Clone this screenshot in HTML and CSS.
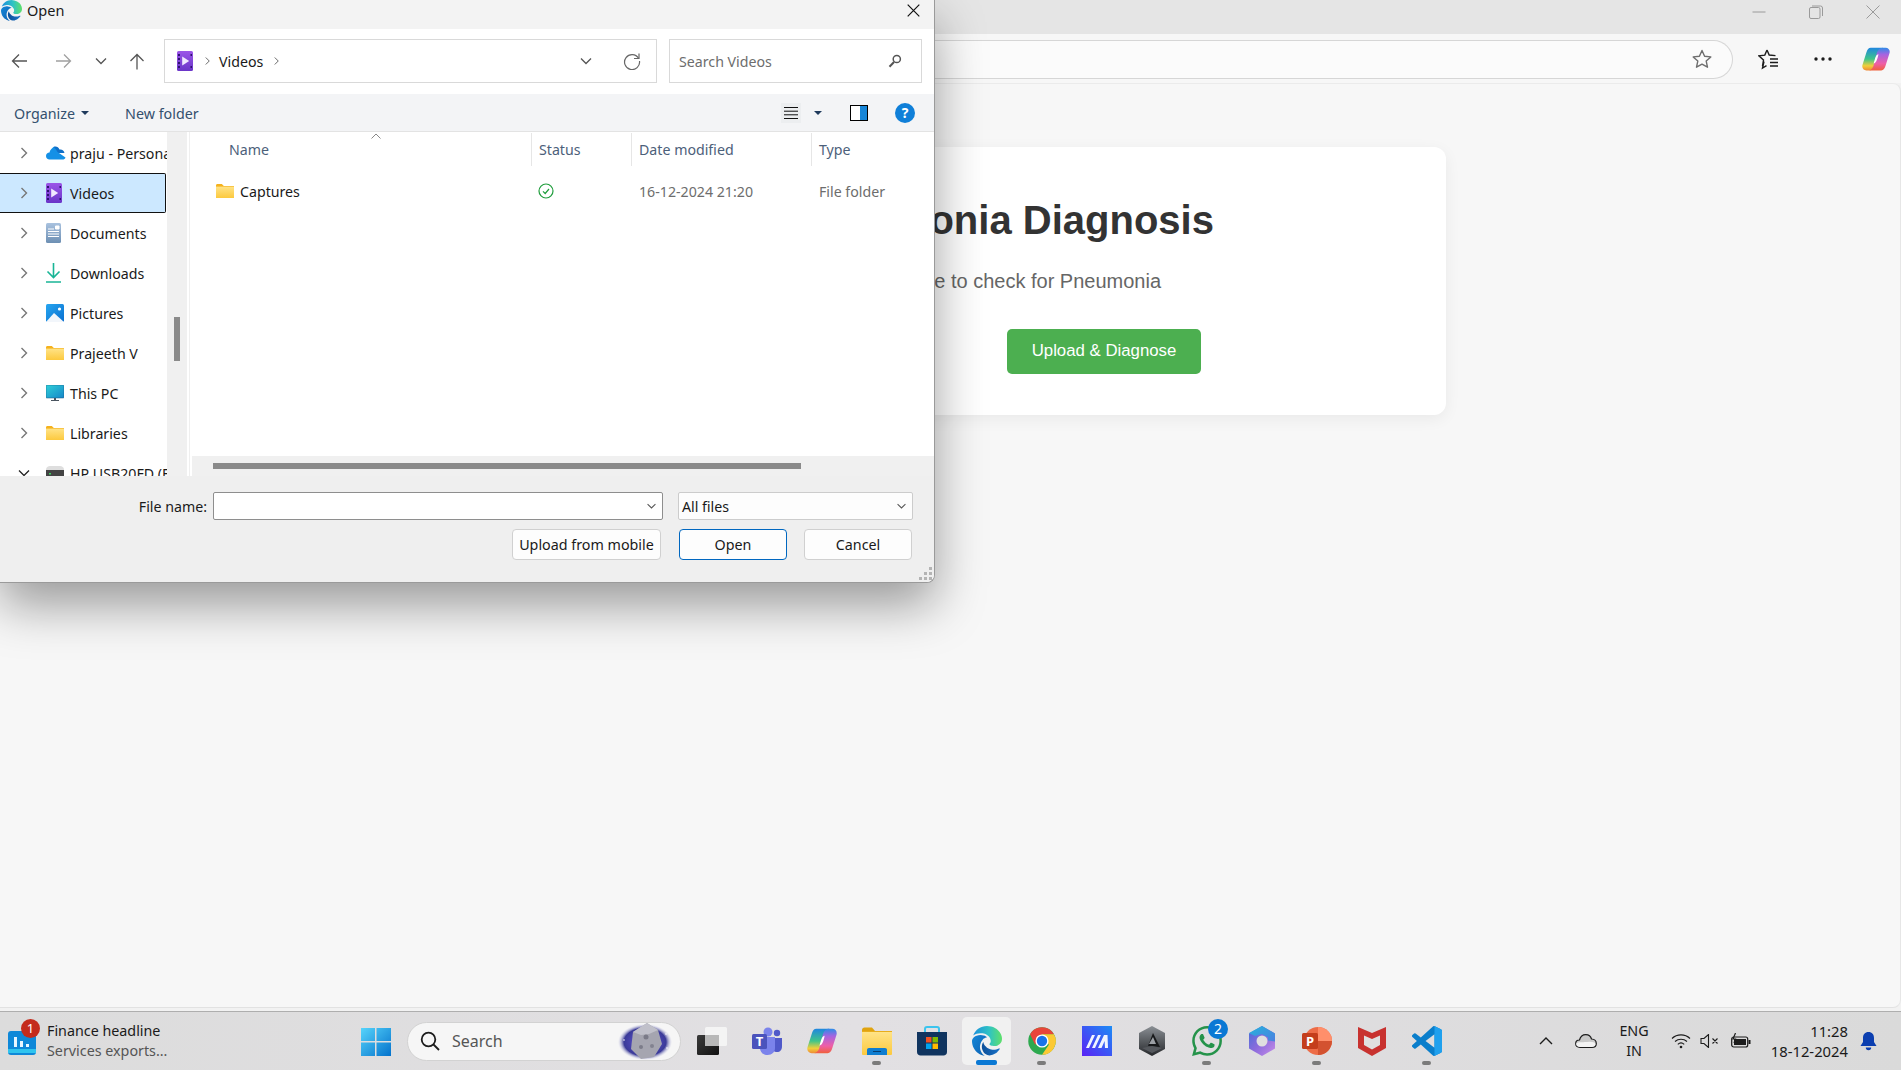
FILE: index.html
```html
<!DOCTYPE html>
<html lang="en">
<head>
<meta charset="utf-8">
<title>Pneumonia Diagnosis</title>
<link rel="stylesheet" href="styles.css">
</head>
<body>
<svg class="defs" aria-hidden="true">
  <defs>
    <linearGradient id="gFolder" x1="0" y1="0" x2="0" y2="1"><stop offset="0" stop-color="#ffe48a"/><stop offset="1" stop-color="#fcc93e"/></linearGradient>
    <linearGradient id="gVideo" x1="0" y1="0" x2="0" y2="1"><stop offset="0" stop-color="#9b55e8"/><stop offset="1" stop-color="#6a35c8"/></linearGradient>
    <linearGradient id="gDoc" x1="0" y1="0" x2="0" y2="1"><stop offset="0" stop-color="#a9c2df"/><stop offset="1" stop-color="#6d8fb3"/></linearGradient>
    <linearGradient id="gPic" x1="0" y1="0" x2="1" y2="1"><stop offset="0" stop-color="#27a6f0"/><stop offset="1" stop-color="#0a6fd0"/></linearGradient>
    <linearGradient id="gPc" x1="0" y1="0" x2="1" y2="1"><stop offset="0" stop-color="#2fd0d8"/><stop offset="1" stop-color="#1686c8"/></linearGradient>
    <linearGradient id="gEdgeA" x1="0" y1="0" x2="1" y2="0"><stop offset="0" stop-color="#1b8fdc"/><stop offset=".55" stop-color="#2fc3c4"/><stop offset="1" stop-color="#5fe06a"/></linearGradient>
    <linearGradient id="gEdgeB" x1="0" y1="0" x2="1" y2="1"><stop offset="0" stop-color="#1487d8"/><stop offset="1" stop-color="#0d5fb0"/></linearGradient>
    <linearGradient id="gEdgeC" x1="0" y1="0" x2="1" y2="0"><stop offset="0" stop-color="#0c4f99"/><stop offset="1" stop-color="#1a73c8"/></linearGradient>
    <linearGradient id="gCopA" x1="0" y1="0" x2="0" y2="1"><stop offset="0" stop-color="#1f86e0"/><stop offset=".5" stop-color="#3fc58a"/><stop offset=".8" stop-color="#f2cf3a"/><stop offset="1" stop-color="#ee8b36"/></linearGradient>
    <linearGradient id="gCopB" x1="0" y1="1" x2="0" y2="0"><stop offset="0" stop-color="#f0603c"/><stop offset=".3" stop-color="#ee5fa8"/><stop offset=".7" stop-color="#a564e0"/><stop offset="1" stop-color="#2d8ce8"/></linearGradient>
    <linearGradient id="gWin" x1="0" y1="0" x2="1" y2="1"><stop offset="0" stop-color="#56d4fb"/><stop offset="1" stop-color="#0472cc"/></linearGradient>
    <linearGradient id="gMura" x1="0" y1="1" x2="1" y2="0"><stop offset="0" stop-color="#5a22f5"/><stop offset="1" stop-color="#1c8cf5"/></linearGradient>
    <linearGradient id="gHex" x1="0" y1="0" x2="0" y2="1"><stop offset="0" stop-color="#8a8f94"/><stop offset="1" stop-color="#26282b"/></linearGradient>
    <linearGradient id="gM365" x1="0" y1="0" x2="1" y2="1"><stop offset="0" stop-color="#3f6fd8"/><stop offset=".5" stop-color="#8b6bdc"/><stop offset="1" stop-color="#c78de8"/></linearGradient>
    <linearGradient id="gM365b" x1="0" y1="0" x2="1" y2="1"><stop offset="0" stop-color="#26b3dc"/><stop offset="1" stop-color="#4b7fe0"/></linearGradient>
    <linearGradient id="gTask" x1="0" y1="0" x2="1" y2="1"><stop offset="0" stop-color="#3a3a3a"/><stop offset="1" stop-color="#111"/></linearGradient>
    <radialGradient id="gMoon" cx=".5" cy=".5" r=".5"><stop offset=".5" stop-color="#4c46b4"/><stop offset=".78" stop-color="#3a3a98"/><stop offset="1" stop-color="#dfe0ee" stop-opacity=".1"/></radialGradient>
    <symbol id="chev" viewBox="0 0 10 14"><path d="M2.5 2l5 5-5 5" fill="none" stroke="currentColor" stroke-width="1.4"/></symbol>
    <symbol id="down" viewBox="0 0 14 10"><path d="M2 2.5l5 5 5-5" fill="none" stroke="currentColor" stroke-width="1.3"/></symbol>
    <symbol id="folder" viewBox="0 0 18 16"><path d="M0 2.5C0 1.6.6 1 1.4 1h4.4l2 2H0z" fill="#f5b21d"/><path d="M0 3h18v12H0z" fill="url(#gFolder)"/><path d="M0 3h18v.7H0z" fill="#f5b82d"/></symbol>
    <symbol id="video" viewBox="0 0 16 20"><rect width="16" height="20" rx="1.500" fill="url(#gVideo)"/><path d="M5.200 5.500v9l7-4.500z" fill="#f1e8ff"/><path d="M1 3h2v2H1zM1 7h2v2H1zM1 11h2v2H1zM1 15h2v2H1zM13.500 3h1.500v2h-1.500zM13.500 15h1.500v2h-1.500z" fill="#2e1270"/></symbol>
    <symbol id="copilot" viewBox="0 0 32 32">
      <path d="M10 3h14c-3 1-4.500 3-5.300 6L15 23c-1 3.500-3 6-6.500 6H5C1.500 29-.5 26 .6 22.500L5 8.500C6 5 7.500 3 10 3z" fill="url(#gCopA)"/>
      <path d="M22 29H8c3-1 4.500-3 5.300-6L17 9c1-3.500 3-6 6.500-6H27c3.500 0 5.500 3 4.400 6.500L27 23.500C26 27 24.500 29 22 29z" fill="url(#gCopB)"/>
      <path d="M15.800 13c.7-1.500 1.800-2.300 3-2.500-.5 2.700-1.200 5.600-2.500 8-.7 1.400-1.800 2.300-3 2.500.8-2.600 1.400-5.700 2.500-8z" fill="#fff"/>
    </symbol>
  </defs>
</svg>

<div class="browser">
  <div class="tabstrip">
    <span class="winbtn"><svg width="14" height="14" viewBox="0 0 14 14"><path d="M.5 7h13" stroke="#9a9a9a"/></svg></span>
    <span class="winbtn"><svg width="14" height="14" viewBox="0 0 14 14" fill="none" stroke="#9a9a9a"><rect x=".5" y="2.500" width="10.500" height="11" rx="1.500"/><path d="M3 1h8.500a2 2 0 0 1 2 2v8"/></svg></span>
    <span class="winbtn"><svg width="14" height="14" viewBox="0 0 14 14"><path d="M.5.5l13 13M13.500.5l-13 13" stroke="#9a9a9a"/></svg></span>
  </div>
  <div class="navbar">
    <div class="omnibox">
      <svg class="omni-star" width="22" height="22" viewBox="0 0 22 22"><path d="M11 2.500l2.600 5.700 6.200.7-4.600 4.200 1.300 6.100-5.500-3.100-5.500 3.100 1.300-6.100-4.600-4.200 6.200-.7z" fill="none" stroke="#6e6e6e" stroke-width="1.400" stroke-linejoin="round"/></svg>
    </div>
    <svg class="nav-fav" width="22" height="22" viewBox="0 0 22 22" fill="none" stroke="#1c1c1c" stroke-width="1.400"><path d="M9 2l2.200 5 6.300.6M6 13.500l-1.500 6.500 4-2.300M9 2L6.800 7.100.9 7.800 5.500 12l-1 6"/><path d="M12 11h8M12 14.500h8M12 18h8"/></svg>
    <svg class="nav-more" width="18" height="6" viewBox="0 0 18 6" fill="#1c1c1c"><circle cx="2" cy="3" r="1.700"/><circle cx="9" cy="3" r="1.700"/><circle cx="16" cy="3" r="1.700"/></svg>
    <svg class="nav-cop" width="28" height="28"><use href="#copilot"/></svg>
  </div>
  <main class="page">
    <section class="card">
      <h1 class="card-title">Pneumonia Diagnosis</h1>
      <p class="card-sub">Upload image to check for Pneumonia</p>
      <button class="diagnose">Upload &amp; Diagnose</button>
    </section>
  </main>
</div>

<div class="dialog">
  <div class="dlg-title">
    <svg class="dlg-logo" width="21" height="21" viewBox="0 0 24 24"><path d="M21.86 17.86q.14 0 .25.12.1.13.1.25t-.11.33l-.32.46-.43.53-.44.5q-.21.25-.38.42l-.22.23q-.58.53-1.34 1.04-.76.51-1.6.91-.86.4-1.74.64t-1.67.24q-.9 0-1.69-.28-.8-.28-1.48-.78-.68-.5-1.22-1.17-.53-.66-.92-1.44-.38-.77-.58-1.6-.2-.83-.2-1.67 0-1 .32-1.96.33-.97.87-1.8.14.95.55 1.77.41.82 1.02 1.5.6.68 1.38 1.21.78.54 1.64.9.86.36 1.77.56.92.2 1.8.2 1.12 0 2.18-.24 1.06-.23 2.06-.72l.2-.1.2-.05z" fill="url(#gEdgeC)"/><path d="M6.36 16.59q0 1.1.27 2.15.27 1.06.78 2.03.51.96 1.24 1.77.74.82 1.66 1.4-1.47-.2-2.8-.74-1.33-.55-2.48-1.37-1.15-.83-2.08-1.9-.92-1.07-1.58-2.33T.36 14.94Q0 13.54 0 12.06q0-.81.32-1.49.31-.68.83-1.23.53-.55 1.2-.96.66-.4 1.35-.66.74-.27 1.5-.39.78-.12 1.55-.12.7 0 1.42.1.72.12 1.4.35.68.23 1.32.57.63.35 1.16.83-.35 0-.7.07-.33.07-.65.23v-.02q-.63.28-1.2.74-.57.46-1.05 1.04-.48.58-.87 1.26-.38.67-.65 1.39-.27.71-.42 1.44-.15.72-.15 1.38z" fill="url(#gEdgeB)"/><path d="M11.96.06q1.7 0 3.33.39 1.63.38 3.07 1.15 1.43.77 2.62 1.93 1.18 1.16 1.98 2.7.49.94.76 1.96.28 1 .28 2.08 0 .89-.23 1.7-.24.8-.69 1.48-.45.68-1.1 1.22-.64.53-1.45.88-.54.24-1.11.36-.58.13-1.16.13-.42 0-.97-.03-.54-.03-1.1-.12-.55-.1-1.05-.28-.5-.19-.84-.5-.12-.09-.23-.24-.1-.16-.1-.33 0-.15.16-.35.16-.2.35-.5.2-.28.36-.68.16-.4.16-.95 0-1.06-.4-1.96-.4-.91-1.06-1.64-.66-.74-1.52-1.28-.86-.55-1.79-.89-.84-.3-1.72-.44-.87-.14-1.76-.14-1.55 0-3.06.45T.94 7.55q.71-1.74 1.81-3.13 1.1-1.38 2.52-2.34 1.41-.96 3.08-1.47Q10.02.06 11.96.06Z" fill="url(#gEdgeA)"/></svg>
    <span class="dlg-name">Open</span>
    <svg class="dlg-close" width="13" height="13" viewBox="0 0 13 13"><path d="M.7.7l11.600 11.600M12.300.7L.7 12.300" stroke="#111" stroke-width="1.200"/></svg>
  </div>

  <div class="dlg-tools">
    <svg class="t-back" width="17" height="16" viewBox="0 0 17 16" fill="none" stroke="#555" stroke-width="1.300"><path d="M16 8H1.500M8 1.500L1.500 8 8 14.500"/></svg>
    <svg class="t-fwd" width="17" height="16" viewBox="0 0 17 16" fill="none" stroke="#a0a0a0" stroke-width="1.300"><path d="M1 8h14.500M9 1.500L15.500 8 9 14.500"/></svg>
    <svg class="t-hist" width="12" height="8" viewBox="0 0 12 8" fill="none" stroke="#555" stroke-width="1.300"><path d="M1 1.500l5 5 5-5"/></svg>
    <svg class="t-up" width="16" height="17" viewBox="0 0 16 17" fill="none" stroke="#555" stroke-width="1.300"><path d="M8 16.500V1.500M1.500 8L8 1.500 14.500 8"/></svg>
    <div class="addr">
      <svg class="a-video" width="16" height="20"><use href="#video"/></svg>
      <svg class="a-chev" width="7" height="10" color="#666"><use href="#chev"/></svg>
      <span class="a-text">Videos</span>
      <svg class="a-chev2" width="7" height="10" color="#666"><use href="#chev"/></svg>
      <svg class="a-drop" width="14" height="10" color="#555"><use href="#down"/></svg>
      <svg class="a-refresh" width="18" height="18" viewBox="0 0 18 18" fill="none" stroke="#666" stroke-width="1.200"><path d="M15.500 6.200A7.500 7.500 0 1 0 16.500 9"/><path d="M16 1.500v5h-5"/></svg>
    </div>
    <div class="searchbox">
      <span class="s-text">Search Videos</span>
      <svg width="14" height="14" viewBox="0 0 14 14" fill="none" stroke="#555" stroke-width="1.500"><circle cx="8.800" cy="5" r="3.600"/><path d="M6 8L1.500 12.800" stroke-width="2"/></svg>
    </div>
  </div>

  <div class="dlg-cmds">
    <span class="cmd">Organize</span><span class="caret"></span>
    <span class="cmd cmd-new">New folder</span>
    <span class="view-btn"><svg width="14" height="14" viewBox="0 0 14 14" stroke="#111"><path d="M0 1.500h14M0 5.200h14M0 8.800h14M0 12.500h14"/></svg></span>
    <span class="caret caret-v"></span>
    <svg class="pane-ico" width="18" height="16" viewBox="0 0 18 16"><rect x=".5" y=".5" width="17" height="15" fill="#fff" stroke="#000"/><rect x="10" y="1" width="7" height="14" fill="#1585d8"/></svg>
    <span class="help">?</span>
  </div>

  <div class="dlg-main">
    <nav class="tree">
      <div class="tree-row"><svg class="tw" width="10" height="14" color="#777"><use href="#chev"/></svg>
        <svg class="ti" width="20" height="14" viewBox="0 0 20 14"><path d="M7.500 1C10 0 12.500 1 13.500 3.500c2.500-.5 4.500 1 5 3.500L7 7z" fill="#0f6fc8"/><path d="M3.500 13.500C1.500 13.500 0 12 0 10c0-2 1.500-3.500 3.500-3.500.5-2.500 2-4 4-5.500 0 0 2 1 4 5l8 5.500c-.5 1.500-1.500 2-3 2z" fill="#1490e6"/></svg>
        <span class="tl">praju - Personal</span></div>
      <div class="tree-row is-sel"><svg class="tw" width="10" height="14" color="#777"><use href="#chev"/></svg>
        <svg class="ti" width="16" height="20"><use href="#video"/></svg><span class="tl">Videos</span></div>
      <div class="tree-row"><svg class="tw" width="10" height="14" color="#777"><use href="#chev"/></svg>
        <svg class="ti" width="15" height="20" viewBox="0 0 15 20"><rect width="15" height="20" rx="1.500" fill="url(#gDoc)"/><path d="M2 6h6M2 8.500h11M2 11h11M2 13.500h11M9.500 3h3.500v3H9.500z" stroke="#fff" fill="#fff"/></svg>
        <span class="tl">Documents</span></div>
      <div class="tree-row"><svg class="tw" width="10" height="14" color="#777"><use href="#chev"/></svg>
        <svg class="ti" width="15" height="20" viewBox="0 0 15 20" fill="none" stroke="#18b596" stroke-width="1.600"><path d="M7.500 0v14M1.500 8.500l6 6 6-6"/><path d="M0 19h15" stroke-width="1.500"/></svg>
        <span class="tl">Downloads</span></div>
      <div class="tree-row"><svg class="tw" width="10" height="14" color="#777"><use href="#chev"/></svg>
        <svg class="ti" width="18" height="18" viewBox="0 0 18 18"><rect width="18" height="18" rx="1.500" fill="url(#gPic)"/><path d="M0 18l8-9 10 9z" fill="#f2f6fb"/><circle cx="13.500" cy="5" r="1.600" fill="#fff"/></svg>
        <span class="tl">Pictures</span></div>
      <div class="tree-row"><svg class="tw" width="10" height="14" color="#777"><use href="#chev"/></svg>
        <svg class="ti" width="18" height="16"><use href="#folder"/></svg><span class="tl">Prajeeth V</span></div>
      <div class="tree-row"><svg class="tw" width="10" height="14" color="#777"><use href="#chev"/></svg>
        <svg class="ti" width="18" height="16" viewBox="0 0 18 16"><rect width="18" height="13" rx=".8" fill="url(#gPc)" stroke="#14517f" stroke-width=".5"/><path d="M8 13h2v2H8zM5 15h8v1H5z" fill="#4a5560"/></svg>
        <span class="tl">This PC</span></div>
      <div class="tree-row"><svg class="tw" width="10" height="14" color="#777"><use href="#chev"/></svg>
        <svg class="ti" width="18" height="16"><use href="#folder"/></svg><span class="tl">Libraries</span></div>
      <div class="tree-row"><svg class="tw tw-open" width="14" height="10" color="#222"><use href="#down"/></svg>
        <svg class="ti" width="18" height="18" viewBox="0 0 18 18"><path d="M0 6c0-3 2-4 4-4h10c2 0 4 1 4 4z" fill="#dedede"/><rect y="6" width="18" height="10" fill="#444"/><rect x="3" y="9" width="2" height="1.500" fill="#3fd060"/></svg>
        <span class="tl">HP USB20FD (E:)</span></div>
    </nav>
    <div class="tree-scroll"><span class="tree-thumb"></span></div>
    <div class="filelist">
      <div class="list-body">
        <div class="cols">
          <span class="col col-name">Name<svg class="sort" width="10" height="6" viewBox="0 0 10 6"><path d="M.5 5.500L5 1l4.500 4.500" fill="none" stroke="#888"/></svg></span>
          <span class="col col-sep">Status</span>
          <span class="col col-sep">Date modified</span>
          <span class="col col-sep">Type</span>
        </div>
        <div class="file-row">
          <span class="f-name"><svg width="18" height="16"><use href="#folder"/></svg>Captures</span>
          <span class="f-stat"><svg width="16" height="16" viewBox="0 0 16 16" fill="none" stroke="#1f9d3c" stroke-width="1.200"><circle cx="8" cy="8" r="7"/><path d="M5 8.300l2.200 2.200L11 6"/></svg></span>
          <span class="f-meta">16-12-2024 21:20</span>
          <span class="f-meta">File folder</span>
        </div>
      </div>
      <div class="hscroll"><span class="hthumb"></span></div>
    </div>
  </div>

  <div class="dlg-foot">
    <div class="foot-row">
      <label class="fn-label">File name:</label>
      <span class="combo"><svg width="11" height="8" color="#555"><use href="#down"/></svg></span>
      <span class="filter"><span>All files</span><svg width="11" height="8" color="#555"><use href="#down"/></svg></span>
    </div>
    <div class="foot-row foot-btns">
      <button class="wbtn wbtn-up">Upload from mobile</button>
      <button class="wbtn wbtn-def">Open</button>
      <button class="wbtn wbtn-cancel">Cancel</button>
    </div>
    <svg class="grip" width="13" height="13" viewBox="0 0 13 13" fill="#b4b4b4"><path d="M10 0h3v3h-3zM5 5h3v3H5zM10 5h3v3h-3zM0 10h3v3H0zM5 10h3v3H5zM10 10h3v3h-3z"/></svg>
  </div>
</div>

<footer class="taskbar">
  <div class="widget">
    <svg class="w-ico" width="28" height="28" viewBox="0 0 28 28"><rect y="4" width="28" height="24" rx="3" fill="#0f88d8"/><rect y="22" width="28" height="4" fill="#2fc4ee"/><path d="M6 10h3v10H6zM12 14h3v6h-3zM18 17h3v3h-3z" fill="#e9f6ff"/></svg>
    <span class="w-badge">1</span>
    <div class="w-text"><span class="w-h">Finance headline</span><span class="w-s">Services exports...</span></div>
  </div>
  <div class="cell"><svg width="30" height="30" viewBox="0 0 30 30" fill="url(#gWin)"><path d="M0 2h14v13H0zM15.500 2H30v13H15.500zM0 16.500h14V30H0zM15.500 16.500H30V30H15.500z"/></svg></div>
  <div class="tsearch">
    <svg width="20" height="20" viewBox="0 0 20 20" fill="none" stroke="#1c1c1c" stroke-width="1.800"><circle cx="8.500" cy="8.500" r="6.800"/><path d="M13.500 13.500L19 19"/></svg>
    <span class="ts-text">Search</span>
    <svg class="ts-moon" width="56" height="38" viewBox="0 0 56 38"><ellipse cx="28" cy="20" rx="27" ry="18" fill="url(#gMoon)"/><path d="M16 10l14-9 11 7 4 14-8 13-13 2-10-10z" fill="#a5a5b0"/><path d="M16 10l14-9 11 7-9 4-8 1z" fill="#c0c0ca"/><circle cx="29" cy="15" r="2.500" fill="#7a7a88"/><circle cx="24" cy="25" r="2" fill="#7c7c8a"/><circle cx="35" cy="24" r="2" fill="#828290"/><circle cx="7" cy="18" r=".8" fill="#fff"/><circle cx="49" cy="12" r=".8" fill="#fff"/><circle cx="50" cy="26" r=".8" fill="#fff"/></svg>
  </div>
  <div class="apps">
    <div class="cell"><svg width="30" height="30" viewBox="0 0 30 30"><rect x="8" y="1" width="22" height="19" rx="1.500" fill="#f4f4f4"/><rect y="9" width="22" height="20" rx="1.500" fill="url(#gTask)"/><rect x="8" y="9" width="14" height="11" fill="#b8b8b8"/></svg></div>
    <div class="cell"><svg width="30" height="28" viewBox="0 0 30 28"><circle cx="25" cy="6" r="3.200" fill="#5059c9"/><path d="M20 11h10v8c0 4-2 6-5 6s-5-2-5-6z" fill="#5059c9"/><circle cx="16" cy="5" r="4.500" fill="#7b83eb"/><path d="M8 10h15v11c0 4-3 7-7.500 7S8 25 8 21z" fill="#7b83eb"/><rect y="7" width="15" height="15" rx="1.500" fill="#4b53bc"/><text class="ico-t" x="7.500" y="19" text-anchor="middle">T</text></svg></div>
    <div class="cell"><svg width="30" height="30"><use href="#copilot"/></svg></div>
    <div class="cell has-dot"><svg width="30" height="28" viewBox="0 0 30 28"><path d="M0 3c0-1.500 1-2.500 2.500-2.500H10l3 3.500H0z" fill="#e0a30f"/><path d="M0 4h30v23a1 1 0 0 1-1 1H1a1 1 0 0 1-1-1z" fill="url(#gFolder)"/><path d="M0 4h30v1H0z" fill="#e8ad1c"/><path d="M5 28v-5c0-1.200.8-2 2-2h16c1.200 0 2 .8 2 2v5z" fill="#0f7dd0"/><path d="M11 24h8v1h-8z" fill="#063e72"/></svg></div>
    <div class="cell"><svg width="30" height="30" viewBox="0 0 30 30"><path d="M8 7V3c0-1 .6-2 2-2h10c1.400 0 2 1 2 2v4" fill="none" stroke="#3cc4ee" stroke-width="2"/><path d="M0 6h30v20c0 2-1.500 3.500-3.500 3.500h-23C1.500 29.500 0 28 0 26z" fill="#10345f"/><path d="M9 11h5.500v5.500H9z" fill="#f25022"/><path d="M15.500 11H21v5.500h-5.500z" fill="#7fba00"/><path d="M9 17.500h5.500V23H9z" fill="#00a4ef"/><path d="M15.500 17.500H21V23h-5.500z" fill="#ffb900"/></svg></div>
    <div class="cell is-active"><svg width="30" height="30" viewBox="0 0 24 24"><path d="M21.86 17.86q.14 0 .25.12.1.13.1.25t-.11.33l-.32.46-.43.53-.44.5q-.21.25-.38.42l-.22.23q-.58.53-1.34 1.04-.76.51-1.6.91-.86.4-1.74.64t-1.67.24q-.9 0-1.69-.28-.8-.28-1.48-.78-.68-.5-1.22-1.17-.53-.66-.92-1.44-.38-.77-.58-1.6-.2-.83-.2-1.67 0-1 .32-1.96.33-.97.87-1.8.14.95.55 1.77.41.82 1.02 1.5.6.68 1.38 1.21.78.54 1.64.9.86.36 1.77.56.92.2 1.8.2 1.12 0 2.18-.24 1.06-.23 2.06-.72l.2-.1.2-.05z" fill="url(#gEdgeC)"/><path d="M6.36 16.59q0 1.1.27 2.15.27 1.06.78 2.03.51.96 1.24 1.77.74.82 1.66 1.4-1.47-.2-2.8-.74-1.33-.55-2.48-1.37-1.15-.83-2.08-1.9-.92-1.07-1.58-2.33T.36 14.94Q0 13.54 0 12.06q0-.81.32-1.49.31-.68.83-1.23.53-.55 1.2-.96.66-.4 1.35-.66.74-.27 1.5-.39.78-.12 1.55-.12.7 0 1.42.1.72.12 1.4.35.68.23 1.32.57.63.35 1.16.83-.35 0-.7.07-.33.07-.65.23v-.02q-.63.28-1.2.74-.57.46-1.05 1.04-.48.58-.87 1.26-.38.67-.65 1.39-.27.71-.42 1.44-.15.72-.15 1.38z" fill="url(#gEdgeB)"/><path d="M11.96.06q1.7 0 3.33.39 1.63.38 3.07 1.15 1.43.77 2.62 1.93 1.18 1.16 1.98 2.7.49.94.76 1.96.28 1 .28 2.08 0 .89-.23 1.7-.24.8-.69 1.48-.45.68-1.1 1.22-.64.53-1.45.88-.54.24-1.11.36-.58.13-1.16.13-.42 0-.97-.03-.54-.03-1.1-.12-.55-.1-1.05-.28-.5-.19-.84-.5-.12-.09-.23-.24-.1-.16-.1-.33 0-.15.16-.35.16-.2.35-.5.2-.28.36-.68.16-.4.16-.95 0-1.06-.4-1.96-.4-.91-1.06-1.64-.66-.74-1.52-1.28-.86-.55-1.79-.89-.84-.3-1.72-.44-.87-.14-1.76-.14-1.55 0-3.06.45T.94 7.55q.71-1.74 1.81-3.13 1.1-1.38 2.52-2.34 1.41-.96 3.08-1.47Q10.02.06 11.96.06Z" fill="url(#gEdgeA)"/></svg></div>
    <div class="cell has-dot"><svg width="30" height="30" viewBox="0 0 48 48"><circle cx="24" cy="24" r="22" fill="#2da94f"/><path d="M4.900 13A22 22 0 0 1 43.100 13H24L13 30z" fill="#e8453a"/><path d="M43.100 13A22 22 0 0 1 24 46L35 30 24 13z" fill="#fcc934"/><circle cx="24" cy="24" r="10.500" fill="#fff"/><circle cx="24" cy="24" r="8.300" fill="#1a73e8"/></svg></div>
    <div class="cell"><svg width="30" height="30" viewBox="0 0 30 30"><rect width="30" height="30" fill="url(#gMura)"/><path d="M4 22l6-13h3L7 22zM10 22l6-13h3l-6 13zM16 22l6-13h3.500L26 22h-3l-.4-7-3.100 7z" fill="#f0f4ff"/></svg></div>
    <div class="cell"><svg width="28" height="30" viewBox="0 0 28 30"><path d="M14 0l13 7v16l-13 7-13-7V7z" fill="url(#gHex)"/><path d="M15 7l7 14-12-1z" fill="#17181a"/><path d="M15 11l3 7-7 0z" fill="#9a9ea3"/><path d="M4 22l10-2 10 2-10 5z" fill="#55585d"/></svg></div>
    <div class="cell has-dot cell-wa"><svg width="30" height="30" viewBox="0 0 24 24"><path fill="#25934a" d="M17.472 14.382c-.297-.149-1.758-.867-2.03-.967-.273-.099-.471-.148-.67.15-.197.297-.767.966-.94 1.164-.173.199-.347.223-.644.075-.297-.15-1.255-.463-2.39-1.475-.883-.788-1.48-1.761-1.653-2.059-.173-.297-.018-.458.13-.606.134-.133.298-.347.446-.52.149-.174.198-.298.298-.497.099-.198.05-.371-.025-.52-.075-.149-.669-1.612-.916-2.207-.242-.579-.487-.5-.669-.51-.173-.008-.371-.01-.57-.01-.198 0-.52.074-.792.372-.272.297-1.04 1.016-1.04 2.479 0 1.462 1.065 2.875 1.213 3.074.149.198 2.096 3.2 5.077 4.487.709.306 1.262.489 1.694.625.712.227 1.36.195 1.871.118.571-.085 1.758-.719 2.006-1.413.248-.694.248-1.289.173-1.413-.074-.124-.272-.198-.57-.347m-5.421 7.403h-.004a9.87 9.87 0 01-5.031-1.378l-.361-.214-3.741.982.998-3.648-.235-.374a9.86 9.86 0 01-1.51-5.26c.001-5.45 4.436-9.884 9.888-9.884 2.64 0 5.122 1.03 6.988 2.898a9.825 9.825 0 012.893 6.994c-.003 5.45-4.437 9.884-9.885 9.884m8.413-18.297A11.815 11.815 0 0012.05 0C5.495 0 .16 5.335.157 11.892c0 2.096.547 4.142 1.588 5.945L.057 24l6.305-1.654a11.882 11.882 0 005.683 1.448h.005c6.554 0 11.89-5.335 11.893-11.893a11.821 11.821 0 00-3.48-8.413Z"/></svg><span class="wa-badge">2</span></div>
    <div class="cell"><svg width="28" height="30" viewBox="0 0 28 30"><path d="M14 0l13 7.500v15L14 30 1 22.500v-15z" fill="url(#gM365)"/><path d="M14 0l13 7.500v8l-7-1v-3l-6-3.500-7 2-6-3z" fill="url(#gM365b)"/><circle cx="14" cy="15" r="5.500" fill="#dfdfdf"/></svg></div>
    <div class="cell has-dot"><svg width="30" height="30" viewBox="0 0 30 30"><circle cx="16" cy="15" r="14" fill="#ed6c47"/><path d="M16 1a14 14 0 0 1 14 14H16z" fill="#ff8f6b"/><path d="M16 15h14a14 14 0 0 1-14 14z" fill="#d35230"/><rect y="7" width="16" height="16" rx="1.500" fill="#c43e1c"/><text class="ico-t" x="8" y="20" text-anchor="middle">P</text></svg></div>
    <div class="cell"><svg width="28" height="30" viewBox="0 0 28 30"><path d="M0 1l14 6 14-6v21L14 30 0 22z" fill="#c8322f"/><path d="M6 9.500l8 3.500 8-3.500v9.500l-8 4.500L6 19z" fill="#e0e0e0"/></svg></div>
    <div class="cell has-dot"><svg width="30" height="30" viewBox="0 0 24 24"><path fill="#0a7ecb" d="M23.150 2.587L18.210.21a1.494 1.494 0 0 0-1.705.29l-9.460 8.630-4.120-3.128a.999.999 0 0 0-1.276.057L.327 7.261A1 1 0 0 0 .326 8.740L3.899 12 .326 15.260a1 1 0 0 0 .001 1.479L1.650 17.940a.999.999 0 0 0 1.276.057l4.120-3.128 9.460 8.630a1.492 1.492 0 0 0 1.704.29l4.942-2.377A1.500 1.500 0 0 0 24 20.060V3.939a1.500 1.500 0 0 0-.85-1.352zm-5.146 14.861L10.826 12l7.178-5.448v10.896z"/><path fill="#1fa0ee" d="M18 .1c.1 0 .15.1.21.11l4.940 2.377A1.500 1.500 0 0 1 24 3.939V20.060a1.500 1.500 0 0 1-.85 1.352l-4.940 2.377c-.06.01-.11.1-.21.11z"/></svg></div>
  </div>
  <div class="tray">
    <svg class="tr-chev" width="14" height="8" viewBox="0 0 14 8" fill="none" stroke="#1c1c1c" stroke-width="1.400"><path d="M1 7l6-6 6 6"/></svg>
    <svg class="tr-cloud" width="22" height="14" viewBox="0 0 22 14"><path d="M5 13.300C2.500 13.300.7 11.700.7 9.500.7 7.500 2.300 6 4.500 6c.8-3 3.200-5.300 6.300-5.300 2.800 0 5 1.700 5.700 4.300 2.700.2 4.800 2 4.800 4.400 0 2.200-1.800 3.900-4.300 3.900z" fill="#c9c9c9" stroke="#1c1c1c" stroke-width="1.200"/><path d="M1.500 9c2-1.500 5-.5 8-1 3 0 6-1 10 .5l1 1.500c0 1.800-1.500 3-3.800 3H5c-2 0-3.500-1-3.800-2.800z" fill="#f3f3f3"/></svg>
    <div class="tr-lang"><span>ENG</span><span>IN</span></div>
    <svg class="tr-wifi" width="20" height="16" viewBox="0 0 20 16" fill="none" stroke="#1c1c1c" stroke-width="1.100"><path d="M1 5.500a13 13 0 0 1 18 0M4 8.500a9 9 0 0 1 12 0M6.800 11.300a4.800 4.800 0 0 1 6.400 0"/><circle cx="10" cy="14" r="1.300" fill="#1c1c1c" stroke="none"/></svg>
    <svg class="tr-spk" width="20" height="14" viewBox="0 0 20 14" fill="none" stroke="#1c1c1c" stroke-width="1.100"><path d="M1 4.500v5h3l4.500 4V.5L4 4.500zM12.500 4.500l5 5M17.500 4.500l-5 5"/></svg>
    <svg class="tr-bat" width="20" height="16" viewBox="0 0 20 16"><rect x=".7" y="4" width="16" height="10" rx="2" fill="none" stroke="#1c1c1c" stroke-width="1.200"/><rect x="3" y="6" width="12" height="6" fill="#1c1c1c"/><rect x="17.500" y="7" width="2" height="4" fill="#1c1c1c"/><path d="M4.500 0L2 6h2.500L3 10" fill="none" stroke="#1c1c1c" stroke-width="1.200"/></svg>
    <div class="tr-clock"><span>11:28</span><span>18-12-2024</span></div>
    <svg class="tr-bell" width="17" height="19" viewBox="0 0 17 19" fill="#0c3fb0"><path d="M8.500 0C5 0 3 2.500 3 6v4L.5 14h16L14 10V6c0-3.500-2-6-5.500-6zM5.800 15.500h5.400a2.700 2.700 0 0 1-5.400 0z"/></svg>
  </div>
</footer>
</body>
</html>
```
FILE: styles.css
```css
* { box-sizing: border-box; }
html, body { margin: 0; height: 100%; }
body {
  width: 1901px;
  height: 1070px;
  overflow: hidden;
  display: flex;
  flex-direction: column;
  position: relative;
  font-family: "Noto Sans", "Open Sans", sans-serif;
  font-size: 14.200px;
  color: #1a1a1a;
  background: #f2f2f2;
}
.defs { position: absolute; width: 0; height: 0; }

/* browser behind the dialog */
.browser { flex: 1; display: flex; flex-direction: column; min-height: 0; }
.tabstrip {
  height: 34px;
  background: #e5e5e5;
  display: flex;
  justify-content: flex-end;
  align-items: flex-start;
  padding-top: 5px;
}
.winbtn { width: 57px; height: 14px; display: flex; justify-content: center; }
.navbar {
  height: 49px;
  background: #f7f7f7;
  display: flex;
  align-items: center;
}
.omnibox {
  width: 1733px;
  height: 39px;
  margin-top: 1px;
  border: 1px solid #d6d6d6;
  border-left: 0;
  border-radius: 0 20px 20px 0;
  background: #fbfbfb;
  display: flex;
  justify-content: flex-end;
  align-items: center;
  padding-right: 19px;
}
.nav-fav { margin-left: 25px; }
.nav-more { margin-left: 34px; }
.nav-cop { margin-left: 30px; }
.page {
  flex: 1;
  background: #f7f7f7;
  border-top: 1px solid #ebebeb;
  border-right: 1px solid #e6e6e6;
  border-bottom: 1px solid #e2e2e2;
  border-radius: 0 8px 8px 0;
  padding: 63px 0 0 564px;
  margin-bottom: 3px;
}
.card {
  width: 882px;
  height: 268px;
  background: #fff;
  border-radius: 12px;
  box-shadow: 0 4px 16px rgba(0,0,0,.06);
  display: flex;
  flex-direction: column;
  align-items: center;
  padding-top: 50px;
  font-family: "Liberation Sans", Arial, sans-serif;
}
.card-title { margin: 0; font-size: 40px; line-height: 46px; font-weight: 700; color: #333; }
.card-sub { margin: 26px 27px 0 0; font-size: 20px; line-height: 24px; color: #666; }
.diagnose {
  margin: 36px 0 0 198px;
  width: 194px;
  height: 45px;
  border: 0;
  border-radius: 5px;
  background: #4caf50;
  color: #fff;
  padding-bottom: 2px;
  font: 16.800px "Liberation Sans", Arial, sans-serif;
}

/* file dialog: a window floating over the desktop */
.dialog {
  position: absolute;
  left: 0;
  top: 0;
  width: 935px;
  height: 583px;
  display: flex;
  flex-direction: column;
  background: #fff;
  border-right: 1px solid #9a9a9a;
  border-bottom: 1px solid #9a9a9a;
  border-radius: 0 0 8px 0;
  box-shadow: 0 22px 50px rgba(0,0,0,.38);
}
.dlg-title {
  height: 29px;
  background: #f3f3f3;
  display: flex;
  align-items: flex-start;
  padding-left: 1px;
}
.dlg-name { margin: 0 0 0 5px; line-height: 21px; font-size: 14.500px; }
.dlg-close { margin: 4px 14px 0 auto; }
.dlg-tools { height: 65px; display: flex; align-items: center; padding-bottom: 1px; }
.t-back { margin-left: 11px; }
.t-fwd { margin-left: 27px; }
.t-hist { margin-left: 23px; }
.t-up { margin-left: 22px; }
.addr, .searchbox {
  height: 44px;
  border: 1.500px solid #d9d9d9;
  display: flex;
  align-items: center;
}
.addr { width: 493px; margin-left: 19px; padding-left: 12px; }
.a-chev { margin-left: 11px; }
.a-text { margin-left: 8px; }
.a-chev2 { margin-left: 10px; }
.a-drop { margin-left: auto; }
.a-refresh { margin: 0 15px 0 30px; }
.searchbox { width: 253px; margin-left: 12px; padding: 0 19px 0 9px; justify-content: space-between; color: #6d6d6d; }
.dlg-cmds {
  height: 38px;
  padding-top: 1px;
  background: #f3f4f6;
  border-bottom: 1px solid #e3e3e3;
  display: flex;
  align-items: center;
  color: #34506e;
}
.cmd { margin-left: 14px; font-size: 14.300px; }
.cmd-new { margin-left: 36px; }
.caret { margin-left: 6px; width: 0; height: 0; border: 4px solid transparent; border-top: 4px solid #1f3a5c; border-bottom: 0; }
.view-btn { margin-left: auto; width: 20px; height: 20px; background: #eceef0; display: flex; align-items: center; justify-content: center; }
.caret-v { margin-left: 13px; }
.pane-ico { margin-left: 28px; }
.help {
  margin: 0 19px 0 27px;
  width: 20px;
  height: 20px;
  border-radius: 50%;
  background: #0f7fd8;
  color: #fff;
  font-size: 14px;
  font-weight: 700;
  line-height: 20px;
  text-align: center;
}
.dlg-main { flex: 1; display: flex; min-height: 0; }
.tree { width: 167px; overflow: hidden; padding-top: 1px; flex: none; }
.tree-row {
  height: 40px;
  display: flex;
  align-items: center;
  position: relative;
  white-space: nowrap;
  color: #1a1a1a;
}
.tree-row .tw { position: absolute; left: 19px; top: 13px; }
.tree-row .tw-open { left: 17px; top: 15px; }
.tree-row .ti { margin-left: 46px; position: absolute; }
.tree-row .tl { position: absolute; left: 70px; }
.is-sel { width: 166px; background: #cce8ff; border: 1px solid #111; border-left: 0; border-radius: 0 2px 2px 0; }
.is-sel .tw { top: 12px; }
.tree-scroll { width: 20px; background: #f0f0f0; padding: 185px 7px 0; flex: none; }
.tree-thumb { display: block; height: 44px; background: #8a8a8a; }
.filelist {
  flex: 1;
  display: flex;
  flex-direction: column;
  margin-left: 2px;
  border-left: 1px solid #efefef;
}
.list-body { flex: 1; }
.cols, .file-row { display: grid; grid-template-columns: 341px 100px 180px 1fr; }
.cols { height: 32px; margin-top: 1px; align-items: stretch; }
.col { color: #4c607a; padding-left: 7px; line-height: 33px; position: relative; }
.col-name { padding-left: 39px; }
.col-sep { border-left: 1px solid #e6e6e6; }
.sort { position: absolute; left: 181px; top: 0; }
.file-row { height: 52px; align-items: center; }
.f-name { display: flex; align-items: center; gap: 6px; padding-left: 26px; }
.f-stat { display: flex; padding-left: 7px; }
.f-meta { color: #6d6d6d; padding-left: 8px; }
.hscroll { height: 20px; margin-left: 2px; background: #f0f0f0; padding: 7px 0 0 21px; }
.hthumb { display: block; width: 588px; height: 6px; background: #8a8a8a; }
.dlg-foot {
  height: 106px;
  background: #efefef;
  position: relative;
  padding: 16px 21px 0 0;
  border-radius: 0 0 8px 0;
}
.foot-row { display: flex; justify-content: flex-end; align-items: center; }
.fn-label { margin-right: 6px; }
.combo, .filter {
  height: 28px;
  background: #fff;
  border: 1px solid #8e8e8e;
  border-radius: 2px;
  display: flex;
  align-items: center;
  justify-content: flex-end;
  padding-right: 5px;
}
.combo { width: 450px; }
.filter { width: 235px; margin-left: 15px; border-color: #ccc; background: #fdfdfd; justify-content: space-between; padding-left: 3px; }
.foot-btns { margin-top: 9px; padding-right: 1px; }
.wbtn {
  height: 31px;
  border: 1px solid #d0d0d0;
  border-radius: 4px;
  background: #fdfdfd;
  font: 14.300px "Noto Sans", sans-serif;
  color: #1a1a1a;
  padding: 0;
}
.wbtn-up { width: 149px; }
.wbtn-def { width: 108px; margin-left: 18px; border-color: #0067c0; }
.wbtn-cancel { width: 108px; margin-left: 17px; }
.grip { position: absolute; right: 2px; bottom: 2px; }

/* taskbar */
.taskbar {
  height: 59px;
  flex: none;
  border-top: 1px solid #aeaeae;
  background: linear-gradient(90deg, #dcdcdc, #e2e0e3 45%, #dadada);
  display: flex;
  align-items: center;
  position: relative;
  color: #1a1a1a;
}
.widget { width: 348px; height: 100%; display: flex; align-items: center; position: relative; padding-left: 8px; }
.w-badge {
  position: absolute;
  left: 21px;
  top: 7px;
  width: 19px;
  height: 19px;
  border-radius: 50%;
  background: #c42b1c;
  color: #fff;
  font-size: 13px;
  line-height: 19px;
  text-align: center;
}
.w-text { margin-left: 11px; display: flex; flex-direction: column; line-height: 20px; font-size: 14.300px; }
.w-s { color: #555; }
.cell {
  width: 55px;
  height: 48px;
  flex: none;
  display: flex;
  align-items: center;
  justify-content: center;
  position: relative;
}
.tsearch {
  width: 274px;
  height: 39px;
  margin-left: 4px;
  border-radius: 20px;
  background: #f6f6f6;
  border: 1px solid #d2d2d2;
  display: flex;
  align-items: center;
  padding-left: 12px;
  font-size: 16px;
  color: #555;
}
.ts-text { margin-left: 12px; }
.ts-moon { margin-left: auto; margin-right: 7px; }
.apps { display: flex; margin-left: 3px; }
.has-dot::after, .is-active::after {
  content: "";
  position: absolute;
  left: 23px;
  bottom: 0;
  width: 9px;
  height: 4px;
  border-radius: 2px;
  background: #7b7b7b;
}
.is-active::before {
  content: "";
  position: absolute;
  inset: 0 3px;
  background: #f1f1f1;
  border-radius: 5px;
}
.is-active svg { position: relative; }
.is-active::after { left: 17px; width: 21px; height: 5px; background: #0a78d4; }
.wa-badge {
  position: absolute;
  left: 29px;
  top: 2px;
  width: 20px;
  height: 20px;
  border-radius: 50%;
  background: #0a78d4;
  color: #fff;
  font-size: 14px;
  line-height: 20px;
  text-align: center;
}
.ico-t { font: 700 13px "Noto Sans", sans-serif; fill: #fff; }
.tray { margin-left: auto; display: flex; align-items: center; padding-right: 24px; }
.tr-cloud { margin-left: 22px; }
.tr-lang { width: 56px; margin-left: 9px; display: flex; flex-direction: column; align-items: center; line-height: 20px; font-size: 14.300px; }
.tr-wifi { margin-left: 9px; }
.tr-spk { margin-left: 9px; }
.tr-bat { margin: 0 3px 0 11px; }
.tr-clock { width: 94px; display: flex; flex-direction: column; align-items: flex-end; line-height: 20px; font-size: 14.800px; white-space: nowrap; }
.tr-bell { margin-left: 12px; }
```
